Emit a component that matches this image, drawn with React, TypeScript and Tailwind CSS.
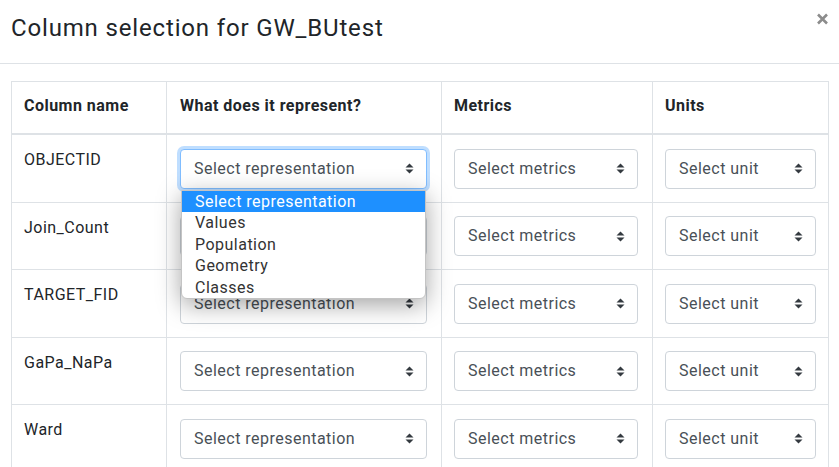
import React from "react";

type Row = { name: string; h: string; focused?: boolean; open?: boolean };

const rows: Row[] = [
  { name: "OBJECTID", h: "h-[68px]", focused: true, open: true },
  { name: "Join_Count", h: "h-[67px]" },
  { name: "TARGET_FID", h: "h-[68px]" },
  { name: "GaPa_NaPa", h: "h-[67px]" },
  { name: "Ward", h: "h-[68px]" },
];

const options = ["Select representation", "Values", "Population", "Geometry", "Classes"];

function Arrows() {
  return (
    <svg width="9" height="11" viewBox="0 0 9 11" className="shrink-0">
      <polygon points="4.5,0.5 8.5,4.5 0.5,4.5" fill="#343a40" />
      <polygon points="0.5,6.5 8.5,6.5 4.5,10.5" fill="#343a40" />
    </svg>
  );
}

function FakeSelect({
  label,
  width,
  focused,
}: {
  label: string;
  width: string;
  focused?: boolean;
}) {
  return (
    <div
      className={
        "flex h-10 items-center justify-between rounded-[4px] border bg-white pl-[13px] pr-[12px] text-[16px] text-[#495057] " +
        width +
        (focused
          ? " border-[#80bdff] shadow-[0_0_0_3px_rgba(0,123,255,0.25)]"
          : " border-[#ced4da]")
      }
    >
      <span>{label}</span>
      <Arrows />
    </div>
  );
}

export default function App() {
  return (
    <div className="h-[467px] w-[839px] overflow-hidden bg-white font-['Roboto',sans-serif] tracking-[0.03em] text-[#212529]">
      <div className="flex h-[64px] items-start justify-between border-b border-[#dee2e6] pl-[11px] pr-[11px]">
        <h5 className="pt-[14px] text-[24px] leading-[1.2] tracking-[0.035em]">Column selection for GW_BUtest</h5>
        <svg width="11" height="12" viewBox="0 0 11 12" className="mt-[13px]">
          <path d="M1 1.5 L10 10.5 M10 1.5 L1 10.5" stroke="#8c8c8c" strokeWidth="2.6" />
        </svg>
      </div>

      <div className="pl-[11px] pt-[17px]">
        <div className="grid w-[818px] grid-cols-[155px_275px_211px_176px] border-l border-t border-[#dee2e6] text-[16px] leading-6">
          <div className="h-[53px] border-b-2 border-r border-[#dee2e6] pl-3 pt-[12px] font-bold">Column name</div>
          <div className="h-[53px] border-b-2 border-r border-[#dee2e6] pl-[13px] pt-[12px] font-bold">What does it represent?</div>
          <div className="h-[53px] border-b-2 border-r border-[#dee2e6] pl-3 pt-[12px] font-bold">Metrics</div>
          <div className="h-[53px] border-b-2 border-r border-[#dee2e6] pl-3 pt-[12px] font-bold">Units</div>

          {rows.map((r) => (
            <React.Fragment key={r.name}>
              <div className={"border-b border-r border-[#dee2e6] pl-3 pt-[13px] " + r.h}>{r.name}</div>
              <div className={"flex items-center border-b border-r border-[#dee2e6] pl-[13px] " + r.h}>
                <div className="relative">
                  <FakeSelect label="Select representation" width="w-[247px]" focused={r.focused} />
                  {r.open && (
                    <ul className="absolute left-[1px] top-[41px] z-10 w-[245px] overflow-hidden rounded-b-[6px] border border-[#c4c4c4] bg-white text-[16px] leading-[21.5px] text-[#333] shadow-[0_6px_24px_rgba(0,0,0,0.36)]">
                      {options.map((o, i) => (
                        <li
                          key={o}
                          className={
                            "h-[21.5px] pl-[13px] " + (i === 0 ? "bg-[#1e90ff] text-white" : "")
                          }
                        >
                          {o}
                        </li>
                      ))}
                    </ul>
                  )}
                </div>
              </div>
              <div className={"flex items-center border-b border-r border-[#dee2e6] pl-[12px] " + r.h}>
                <FakeSelect label="Select metrics" width="w-[184px]" />
              </div>
              <div className={"flex items-center border-b border-r border-[#dee2e6] pl-[12px] " + r.h}>
                <FakeSelect label="Select unit" width="w-[151px]" />
              </div>
            </React.Fragment>
          ))}
        </div>
      </div>
    </div>
  );
}
